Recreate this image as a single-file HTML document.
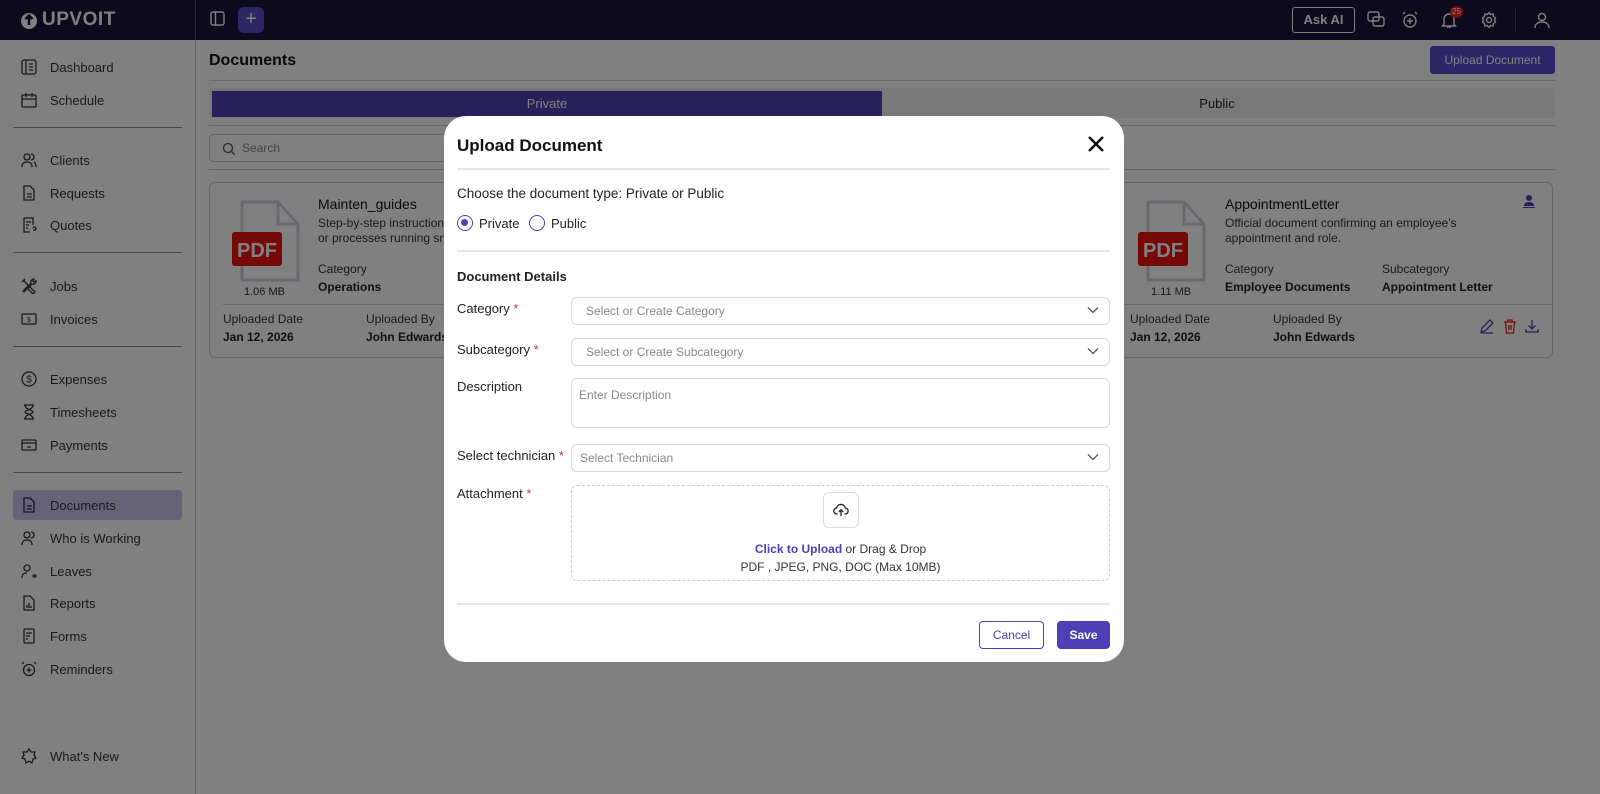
<!DOCTYPE html>
<html><head><meta charset="utf-8">
<style>
*{box-sizing:border-box;margin:0;padding:0}
html,body{background:#808080}
body{width:1600px;height:794px;overflow:hidden;font-family:"Liberation Sans",sans-serif;position:relative;color:#111}
.bg{position:absolute;left:0;top:0;width:1600px;height:794px;background:#fff;filter:brightness(.5)}
.top{position:absolute;left:0;top:0;width:1600px;height:40px;background:#181438}
.side{position:absolute;left:0;top:40px;width:196px;height:754px;border-right:1px solid #ccc;background:#fff}
.nav{position:absolute;left:13px;width:169px;height:30px;display:flex;align-items:center;font-size:13px;color:#333}
.nav svg{margin-left:8px;margin-right:13px}
.sep{position:absolute;left:13px;width:169px;height:1px;background:#8e8aa8}
.main{position:absolute;left:196px;top:40px;right:0;bottom:0}
.modal{position:absolute;left:444px;top:116px;width:680px;height:546px;background:#fff;border-radius:22px;font-size:13px;color:#222}
.lbl{position:absolute;left:13px;font-size:13px;color:#222}
.star{color:#d33}
.inp{position:absolute;left:127px;width:539px;border:1px solid #d8d8dc;border-radius:6px;font-size:12px;color:#888;padding-left:14px;display:flex;align-items:center}
.chev{position:absolute;right:10px;top:50%;margin-top:-5px}
.hr{position:absolute;left:13px;width:653px;height:2px;background:#e6e4f4}
</style></head><body>
<div class="bg">
<div class="top">
 <div style="position:absolute;left:19px;top:9px;color:#fff;font-weight:bold;font-size:19px;letter-spacing:.5px;display:flex;align-items:center;gap:3px">
  <svg width="20" height="20" viewBox="0 0 20 20"><circle cx="10" cy="11" r="8" fill="#fff"/><path d="M10 15V6M6.5 9L10 5.5 13.5 9" stroke="#181438" stroke-width="2.5" fill="none"/></svg>UPVOIT</div>
 <div style="position:absolute;left:195px;top:0;width:1px;height:40px;background:#555"></div>
 <svg style="position:absolute;left:210px;top:11px" width="15" height="15" viewBox="0 0 15 15"><rect x="1" y="1" width="13" height="13" rx="2" fill="none" stroke="#fff" stroke-width="1.4"/><path d="M5.5 1v13" stroke="#fff" stroke-width="1.4"/></svg>
 <div style="position:absolute;left:238px;top:7px;width:26px;height:26px;border-radius:5px;background:#5c4cc8;color:#fff;text-align:center;line-height:25px;font-size:20px">+</div>
 <div style="position:absolute;left:1292px;top:7px;width:63px;height:26px;border:1.5px solid #fff;border-radius:3px;color:#fff;font-size:13px;font-weight:bold;text-align:center;line-height:23px">Ask AI</div>
 <svg style="position:absolute;left:1367px;top:11px" width="18" height="18" viewBox="0 0 18 18" fill="none" stroke="#fff" stroke-width="1.4"><rect x="1" y="1" width="11" height="9" rx="2"/><rect x="6" y="6" width="11" height="9" rx="2"/></svg>
 <svg style="position:absolute;left:1401px;top:11px" width="18" height="18" viewBox="0 0 18 18" fill="none" stroke="#fff" stroke-width="1.4"><circle cx="9" cy="10" r="6"/><path d="M9 7v6M6 10h6M2 3l2-2M16 3l-2-2"/></svg>
 <svg style="position:absolute;left:1440px;top:11px" width="18" height="18" viewBox="0 0 18 18" fill="none" stroke="#fff" stroke-width="1.4"><path d="M4 13V8a5 5 0 0110 0v5l1.5 2h-13zM7 16h4"/></svg>
 <div style="position:absolute;left:1450px;top:6px;width:13px;height:12px;border-radius:6px;background:#e22;color:#fff;font-size:8px;text-align:center;line-height:12px">25</div>
 <svg style="position:absolute;left:1480px;top:11px" width="18" height="18" viewBox="0 0 18 18" fill="none" stroke="#fff" stroke-width="1.4"><circle cx="9" cy="9" r="2.5"/><path d="M9 1.5l1.5 2 2.5-.5.5 2.5 2 1.5-1 2 1 2-2 1.5-.5 2.5-2.5-.5L9 16.5l-1.5-2-2.5.5-.5-2.5-2-1.5 1-2-1-2 2-1.5.5-2.5 2.5.5z"/></svg>
 <div style="position:absolute;left:1515px;top:7px;width:1px;height:26px;background:#444"></div>
 <svg style="position:absolute;left:1533px;top:11px" width="18" height="18" viewBox="0 0 18 18" fill="none" stroke="#fff" stroke-width="1.4"><circle cx="9" cy="6" r="3.5"/><path d="M2 17c0-4 3-6 7-6s7 2 7 6"/></svg>
</div>
<div class="side">
 <div class="nav" style="top:12px"><svg width="16" height="16" viewBox="0 0 16 16" fill="none" stroke="#333" stroke-width="1.3"><rect x="1" y="1" width="14" height="14" rx="2"/><path d="M5 1v14M8 5h4M8 8h4M8 11h4"/></svg>Dashboard</div>
 <div class="nav" style="top:45px"><svg width="16" height="16" viewBox="0 0 16 16" fill="none" stroke="#333" stroke-width="1.3"><rect x="1" y="3" width="14" height="12" rx="1"/><path d="M1 7h14M5 1v4M11 1v4"/></svg>Schedule</div>
 <div class="sep" style="top:87px"></div>
 <div class="nav" style="top:105px"><svg width="16" height="16" viewBox="0 0 16 16" fill="none" stroke="#333" stroke-width="1.3"><circle cx="6" cy="5" r="3"/><path d="M1 15c0-4 2-5 5-5s5 1 5 5M10 2a3 3 0 010 6M13 10c1.5 1 2 2.5 2 5"/></svg>Clients</div>
 <div class="nav" style="top:138px"><svg width="16" height="16" viewBox="0 0 16 16" fill="none" stroke="#333" stroke-width="1.3"><path d="M3 1h6l4 4v10H3zM6 9h5M6 12h5"/></svg>Requests</div>
 <div class="nav" style="top:170px"><svg width="16" height="16" viewBox="0 0 16 16" fill="none" stroke="#333" stroke-width="1.3"><path d="M3 1h9v7M3 1v14h6M5 5h5M5 8h3M5 11h2M12 11a1.5 1.5 0 111 2v1"/></svg>Quotes</div>
 <div class="sep" style="top:212px"></div>
 <div class="nav" style="top:231px"><svg width="16" height="16" viewBox="0 0 16 16" fill="none" stroke="#333" stroke-width="1.3"><path d="M2 2l5 5M1 4l3-3M9 9l5 5-2 2-5-5M13 1a3 3 0 00-3 4L2 13l1 1 8-8a3 3 0 004-3l-2 1-1-1z"/></svg>Jobs</div>
 <div class="nav" style="top:264px"><svg width="16" height="16" viewBox="0 0 16 16" fill="none" stroke="#333" stroke-width="1.3"><rect x="1" y="3" width="14" height="10" rx="1"/><text x="8" y="11" font-size="7" text-anchor="middle" fill="#333" stroke="none">$</text></svg>Invoices</div>
 <div class="sep" style="top:306px"></div>
 <div class="nav" style="top:324px"><svg width="16" height="16" viewBox="0 0 16 16" fill="none" stroke="#333" stroke-width="1.3"><circle cx="8" cy="8" r="7"/><text x="8" y="11.5" font-size="10" text-anchor="middle" fill="#333" stroke="none">$</text></svg>Expenses</div>
 <div class="nav" style="top:357px"><svg width="16" height="16" viewBox="0 0 16 16" fill="none" stroke="#333" stroke-width="1.3"><path d="M3 1h10M3 15h10M4 1c0 5 8 5 8 7s-8 2-8 7M12 1c0 5-8 5-8 7s8 2 8 7"/></svg>Timesheets</div>
 <div class="nav" style="top:390px"><svg width="16" height="16" viewBox="0 0 16 16" fill="none" stroke="#333" stroke-width="1.3"><rect x="1" y="3" width="14" height="10" rx="1"/><path d="M1 6h14M6 10h4"/></svg>Payments</div>
 <div class="sep" style="top:432px"></div>
 <div class="nav" style="top:450px;background:#cbc6ef;border-radius:3px"><svg width="16" height="16" viewBox="0 0 16 16" fill="none" stroke="#2a2266" stroke-width="1.3"><path d="M3 1h6l4 4v10H3zM6 9h5M6 12h5"/></svg><span style="color:#333">Documents</span></div>
 <div class="nav" style="top:483px"><svg width="16" height="16" viewBox="0 0 16 16" fill="none" stroke="#333" stroke-width="1.3"><circle cx="6" cy="5" r="3"/><path d="M1 15c0-4 2-5 5-5s5 1 5 5M10 2a3 3 0 010 6"/></svg>Who is Working</div>
 <div class="nav" style="top:516px"><svg width="16" height="16" viewBox="0 0 16 16" fill="none" stroke="#333" stroke-width="1.3"><circle cx="6" cy="5" r="3"/><path d="M1 15c0-4 2-5 5-5M11 13h4M13 11l2 2-2 2"/></svg>Leaves</div>
 <div class="nav" style="top:548px"><svg width="16" height="16" viewBox="0 0 16 16" fill="none" stroke="#333" stroke-width="1.3"><path d="M3 1h6l4 4v10H3zM6 13v-3M8 13V8M10 13v-2"/></svg>Reports</div>
 <div class="nav" style="top:581px"><svg width="16" height="16" viewBox="0 0 16 16" fill="none" stroke="#333" stroke-width="1.3"><rect x="3" y="1" width="10" height="14" rx="1"/><path d="M5 5h6M5 8h4M5 11h2"/></svg>Forms</div>
 <div class="nav" style="top:614px"><svg width="16" height="16" viewBox="0 0 16 16" fill="none" stroke="#333" stroke-width="1.3"><circle cx="8" cy="9" r="5.5"/><path d="M8 6.5v5M5.5 9h5M1 3l2-2M15 3l-2-2"/></svg>Reminders</div>
 <div class="nav" style="top:701px"><svg width="16" height="16" viewBox="0 0 16 16" fill="none" stroke="#333" stroke-width="1.3"><path d="M8 1l2 3h4l-1 3 2 3-3 1-1 4-3-2-3 2-1-4-3-1 2-3-1-3h4z"/></svg>What's New</div>
</div>
<div class="main">
 <div style="position:absolute;left:13px;top:12px;font-size:16px;font-weight:bold;color:#111">Documents</div>
 <div style="position:absolute;left:1234px;top:6px;width:125px;height:28px;background:#5a4bcc;border-radius:3px;color:#fff;font-size:12px;text-align:center;line-height:28px">Upload Document</div>
 <div style="position:absolute;left:13px;top:40px;width:1346px;height:1px;background:#ccc"></div>
 <div style="position:absolute;left:13px;top:48px;width:1346px;height:30px;background:#f2f2f2;border-radius:3px"></div>
 <div style="position:absolute;left:16px;top:51px;width:670px;height:26px;background:#4e3fb6;color:#fff;font-size:13px;text-align:center;line-height:26px">Private</div>
 <div style="position:absolute;left:686px;top:51px;width:670px;height:26px;color:#222;font-size:13px;text-align:center;line-height:26px">Public</div>
 <div style="position:absolute;left:13px;top:85px;width:1346px;height:1px;background:#ccc"></div>
 <div style="position:absolute;left:13px;top:94px;width:260px;height:28px;border:1px solid #ccc;border-radius:5px;font-size:12px;color:#888;line-height:26px;padding-left:32px">Search
  <svg style="position:absolute;left:12px;top:7px" width="13" height="13" viewBox="0 0 13 13" fill="none" stroke="#555" stroke-width="1.3"><circle cx="6" cy="6" r="4.5"/><path d="M9.5 9.5l3 3"/></svg></div>
 <div style="position:absolute;left:13px;top:129px;width:1346px;height:1px;background:#ccc"></div>
 <div style="position:absolute;left:13px;top:142px;width:1344px;height:176px;border:1px solid #ccc;border-radius:6px"></div>
 <svg style="position:absolute;left:36px;top:160px" width="68" height="84" viewBox="0 0 68 84"><path d="M10 2h36l20 22v56H10z" fill="none" stroke="#ccd3de" stroke-width="3" stroke-linejoin="round"/><path d="M46 2v22h20" fill="none" stroke="#ccd3de" stroke-width="3"/><rect x="0" y="32" width="50" height="34" rx="3" fill="#e11"/><text x="25" y="57" font-size="20" font-weight="bold" fill="#fff" text-anchor="middle" font-family="Liberation Sans">PDF</text></svg>
 <div style="position:absolute;left:48px;top:246px;font-size:11px;color:#333">1.06 MB</div>
 <div style="position:absolute;left:122px;top:156px;font-size:14px;color:#111">Mainten_guides</div>
 <div style="position:absolute;left:122px;top:176px;font-size:12px;color:#333;line-height:15px">Step-by-step instructions<br>or processes running sm</div>
 <div style="position:absolute;left:122px;top:222px;font-size:12px;color:#333">Category</div>
 <div style="position:absolute;left:122px;top:240px;font-size:12px;font-weight:bold;color:#222">Operations</div>
 <div style="position:absolute;left:27px;top:264px;width:1330px;height:1px;background:#ccc"></div>
 <div style="position:absolute;left:27px;top:272px;font-size:12px;color:#333">Uploaded Date</div>
 <div style="position:absolute;left:27px;top:290px;font-size:12px;font-weight:bold;color:#222">Jan 12, 2026</div>
 <div style="position:absolute;left:170px;top:272px;font-size:12px;color:#333">Uploaded By</div>
 <div style="position:absolute;left:170px;top:290px;font-size:12px;font-weight:bold;color:#222">John Edwards</div>
 <svg style="position:absolute;left:942px;top:160px" width="68" height="84" viewBox="0 0 68 84"><path d="M10 2h36l20 22v56H10z" fill="none" stroke="#ccd3de" stroke-width="3" stroke-linejoin="round"/><path d="M46 2v22h20" fill="none" stroke="#ccd3de" stroke-width="3"/><rect x="0" y="32" width="50" height="34" rx="3" fill="#e11"/><text x="25" y="57" font-size="20" font-weight="bold" fill="#fff" text-anchor="middle" font-family="Liberation Sans">PDF</text></svg>
 <div style="position:absolute;left:955px;top:246px;font-size:11px;color:#333">1.11 MB</div>
 <div style="position:absolute;left:1029px;top:156px;font-size:14px;color:#111">AppointmentLetter</div>
 <div style="position:absolute;left:1029px;top:176px;font-size:12px;color:#333;line-height:15px">Official document confirming an employee's<br>appointment and role.</div>
 <div style="position:absolute;left:1029px;top:222px;font-size:12px;color:#333">Category</div>
 <div style="position:absolute;left:1029px;top:240px;font-size:12px;font-weight:bold;color:#222">Employee Documents</div>
 <div style="position:absolute;left:1186px;top:222px;font-size:12px;color:#333">Subcategory</div>
 <div style="position:absolute;left:1186px;top:240px;font-size:12px;font-weight:bold;color:#222">Appointment Letter</div>
 <div style="position:absolute;left:934px;top:272px;font-size:12px;color:#333">Uploaded Date</div>
 <div style="position:absolute;left:934px;top:290px;font-size:12px;font-weight:bold;color:#222">Jan 12, 2026</div>
 <div style="position:absolute;left:1077px;top:272px;font-size:12px;color:#333">Uploaded By</div>
 <div style="position:absolute;left:1077px;top:290px;font-size:12px;font-weight:bold;color:#222">John Edwards</div>
 <svg style="position:absolute;left:1326px;top:154px" width="14" height="14" viewBox="0 0 14 14" fill="#4e3fb6"><circle cx="7" cy="4" r="3"/><path d="M2 12c0-3 2-4 5-4s5 1 5 4zM1 13h12v1H1z"/></svg>
 <svg style="position:absolute;left:1283px;top:278px" width="16" height="16" viewBox="0 0 16 16" fill="none" stroke="#4e3fb6" stroke-width="1.3"><path d="M2 14l1-4 8-8 3 3-8 8zM2 15h12"/></svg>
 <svg style="position:absolute;left:1306px;top:278px" width="16" height="16" viewBox="0 0 16 16" fill="none" stroke="#e22" stroke-width="1.3"><path d="M2 4h12M6 4V2h4v2M3.5 4l1 11h7l1-11M7 7v5M9 7v5"/></svg>
 <svg style="position:absolute;left:1328px;top:278px" width="16" height="16" viewBox="0 0 16 16" fill="none" stroke="#4e3fb6" stroke-width="1.3"><path d="M8 2v9M4.5 7.5L8 11l3.5-3.5M2 11v3h12v-3"/></svg>
</div>
</div>
<div class="modal">
 <div style="position:absolute;left:13px;top:20px;font-size:17px;font-weight:bold;color:#111">Upload Document</div>
 <svg style="position:absolute;left:643px;top:19px" width="18" height="18" viewBox="0 0 18 18" stroke="#111" stroke-width="2.4"><path d="M2 2l14 14M16 2L2 16"/></svg>
 <div class="hr" style="top:52px"></div>
 <div class="lbl" style="top:70px;font-size:13.5px">Choose the document type: Private or Public</div>
 <div style="position:absolute;left:13px;top:99px;width:16px;height:16px;border:1.5px solid #4e3fb6;border-radius:50%"><div style="position:absolute;left:3px;top:3px;width:7px;height:7px;border-radius:50%;background:#4e3fb6"></div></div>
 <div class="lbl" style="top:100px;left:35px">Private</div>
 <div style="position:absolute;left:85px;top:99px;width:16px;height:16px;border:1.5px solid #4e3fb6;border-radius:50%"></div>
 <div class="lbl" style="top:100px;left:107px">Public</div>
 <div class="hr" style="top:134px"></div>
 <div class="lbl" style="top:153px;font-weight:bold">Document Details</div>
 <div class="lbl" style="top:185px">Category <span class="star">*</span></div>
 <div class="inp" style="top:181px;height:28px">Select or Create Category<svg class="chev" width="12" height="8" viewBox="0 0 12 8" fill="none" stroke="#555" stroke-width="1.3"><path d="M1 1.5l5 5 5-5"/></svg></div>
 <div class="lbl" style="top:226px">Subcategory <span class="star">*</span></div>
 <div class="inp" style="top:222px;height:28px">Select or Create Subcategory<svg class="chev" width="12" height="8" viewBox="0 0 12 8" fill="none" stroke="#555" stroke-width="1.3"><path d="M1 1.5l5 5 5-5"/></svg></div>
 <div class="lbl" style="top:263px">Description</div>
 <div class="inp" style="top:262px;height:50px;align-items:flex-start;padding-top:9px;padding-left:7px">Enter Description</div>
 <div class="lbl" style="top:332px">Select technician <span class="star">*</span></div>
 <div class="inp" style="top:328px;height:28px;padding-left:8px">Select Technician<svg class="chev" width="12" height="8" viewBox="0 0 12 8" fill="none" stroke="#555" stroke-width="1.3"><path d="M1 1.5l5 5 5-5"/></svg></div>
 <div class="lbl" style="top:370px">Attachment <span class="star">*</span></div>
 <div style="position:absolute;left:127px;top:369px;width:539px;height:96px;border:1px dashed #d0d0d4;border-radius:6px"></div>
 <div style="position:absolute;left:379px;top:376px;width:36px;height:36px;border:1px solid #ddd;border-radius:6px"></div>
 <svg style="position:absolute;left:389px;top:386px" width="16" height="16" viewBox="0 0 16 16" fill="none" stroke="#222" stroke-width="1.3"><path d="M4.5 12H4a3 3 0 01-.5-6 4.5 4.5 0 018.8 0A3 3 0 0112 12h-.5M8 14V8M5.8 10L8 7.8 10.2 10"/></svg>
 <div style="position:absolute;left:127px;top:426px;width:539px;text-align:center;font-size:12px;color:#333"><span style="color:#4e3fb6;font-weight:bold">Click to Upload</span> or Drag &amp; Drop</div>
 <div style="position:absolute;left:127px;top:444px;width:539px;text-align:center;font-size:12px;color:#333">PDF , JPEG, PNG, DOC (Max 10MB)</div>
 <div class="hr" style="top:487px"></div>
 <div style="position:absolute;left:535px;top:505px;width:65px;height:28px;border:1px solid #4e3fb6;border-radius:4px;color:#4e3fb6;font-size:12px;text-align:center;line-height:26px">Cancel</div>
 <div style="position:absolute;left:613px;top:505px;width:53px;height:28px;background:#4e3fb6;border-radius:4px;color:#fff;font-size:12px;font-weight:bold;text-align:center;line-height:28px">Save</div>
</div>
</body></html>
